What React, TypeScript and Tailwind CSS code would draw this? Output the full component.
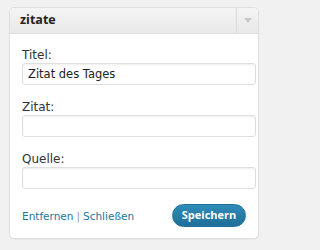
const body = { fontFamily: '"DejaVu Sans", "Liberation Sans", sans-serif' };
const heading = { fontFamily: '"Open Sans", "DejaVu Sans", sans-serif' };

function Field({ label, value, top }: { label: string; value?: string; top: string }) {
  return (
    <div className={top}>
      <label className="block text-[12px] leading-[16px] text-[#333]">{label}</label>
      <input
        readOnly
        value={value ?? ""}
        className="block h-[22px] w-[234px] rounded-[3px] border border-[#dfdfdf] bg-white px-[5px] text-[11.5px] text-[#222] shadow-[inset_0_1px_2px_rgba(0,0,0,0.07)] outline-none"
      />
    </div>
  );
}

export default function App() {
  return (
    <div className="min-h-screen w-full bg-[#f1f1f1] pl-[9px] pt-[7px]" style={body}>
      <div className="w-[250px] overflow-hidden rounded-[5px] border border-[#dfdfdf] bg-white shadow-[0_1px_1px_rgba(0,0,0,0.04)]">
        <div className="flex h-[26px] items-stretch border-b border-[#dfdfdf] bg-gradient-to-b from-[#f4f4f4] to-[#e9e9e9]">
          <h3 className="flex flex-1 items-center pl-[10px] text-[12.5px] font-bold text-[#222]" style={heading}>
            zitate
          </h3>
          <div className="flex w-[22px] items-center justify-center border-l border-[#dadada]">
            <svg width="8" height="5" viewBox="0 0 8 5">
              <path d="M0 0h8L4 5z" fill="#c8c8c8" />
            </svg>
          </div>
        </div>
        <div className="pb-[11px] pl-[12px] pr-[2px]">
          <Field label="Titel:" value="Zitat des Tages" top="pt-[13px]" />
          <Field label="Zitat:" top="pt-[14px]" />
          <Field label="Quelle:" top="pt-[14px]" />
          <div className="mt-[15px] flex items-center justify-between pr-[10px]">
            <div className="pt-[2px] text-[10.5px] text-[#21759b]">
              <span>Entfernen</span>
              <span className="px-[3px] text-[#999]">|</span>
              <span>Schließen</span>
            </div>
            <button
              className="h-[23px] w-[74px] rounded-full border border-[#21759b] bg-gradient-to-b from-[#2e8cb8] to-[#1f6f99] text-[11px] font-bold text-white"
              style={heading}
            >
              Speichern
            </button>
          </div>
        </div>
      </div>
    </div>
  );
}
